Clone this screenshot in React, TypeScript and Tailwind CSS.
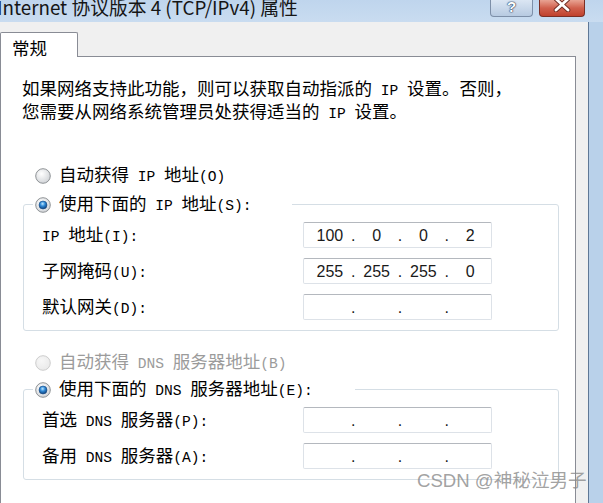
import React from "react";

// SimSun-like rendering: CJK in Noto, half-width Latin runs in a monospace at half the CJK advance
function Txt({ s }: { s: string }) {
  const parts = s.split(/([\x00-\x7f]+)/).filter((p) => p !== "");
  return (
    <>
      {parts.map((p, i) =>
        /[\x00-\x7f]/.test(p) ? (
          <span key={i} className="font-['Liberation_Mono',monospace] text-[14.6px] whitespace-pre">
            {p}
          </span>
        ) : (
          <span key={i}>{p}</span>
        )
      )}
    </>
  );
}

function Radio({ checked, disabled }: { checked?: boolean; disabled?: boolean }) {
  const id = checked ? "rc" : disabled ? "rd" : "rn";
  return (
    <svg width="16" height="16" viewBox="0 0 16 16" className="shrink-0">
      <defs>
        <radialGradient id={id + "bg"} cx="40%" cy="35%" r="70%">
          <stop offset="0%" stopColor={disabled ? "#f7f7f7" : "#ffffff"} />
          <stop offset="100%" stopColor={disabled ? "#e9e9e9" : "#cfd2d6"} />
        </radialGradient>
        <radialGradient id={id + "dot"} cx="45%" cy="35%" r="65%">
          <stop offset="0%" stopColor="#bfe8ff" />
          <stop offset="45%" stopColor="#2f8ad8" />
          <stop offset="100%" stopColor="#0d3f7a" />
        </radialGradient>
      </defs>
      <circle cx="8" cy="8" r="7.3" fill={`url(#${id}bg)`} stroke={disabled ? "#cdcdcd" : "#8f9396"} strokeWidth="1" />
      {checked && <circle cx="8" cy="8" r="4" fill={`url(#${id}dot)`} stroke="#1c4f86" strokeWidth="0.6" />}
    </svg>
  );
}

function IpBox({ values }: { values?: string[] }) {
  const v = values ?? ["", "", "", ""];
  return (
    <div className="w-[189px] h-[26px] flex items-center pl-[5px] rounded-[2px] border border-[#dde2e8] border-t-[#b4b8be] bg-white font-['Liberation_Sans',sans-serif] text-[16px] text-[#1a1a1a]">
      {v.map((n, i) => (
        <React.Fragment key={i}>
          <span className="w-[42px] text-center">{n}</span>
          {i < 3 && <span className="w-[5px] text-center">.</span>}
        </React.Fragment>
      ))}
    </div>
  );
}

function Group({
  label,
  legendW,
  rows,
}: {
  label: string;
  legendW: string;
  rows: { label: string; values?: string[] }[];
}) {
  return (
    <fieldset className="ml-[1px] w-[536px] border border-[#d5dee5] rounded-[3px] pt-[8px] pb-[10px]">
      <legend className={"ml-[9px] bg-white " + legendW}>
        <div className="flex items-center gap-[8px] h-[19px] pl-[2px]">
          <Radio checked />
          <span>
            <Txt s={label} />
          </span>
        </div>
      </legend>
      <div className="grid grid-cols-[261px_189px] gap-y-[10px] pl-[18px] items-center">
        {rows.map((r) => (
          <React.Fragment key={r.label}>
            <div>
              <Txt s={r.label} />
            </div>
            <IpBox values={r.values} />
          </React.Fragment>
        ))}
      </div>
    </fieldset>
  );
}

export default function App() {
  return (
    <div className="relative w-[603px] h-[503px] overflow-hidden bg-[#f0f0f0] text-black text-[17.5px] leading-[19px] font-['Noto_Sans_CJK_SC',sans-serif]">
      {/* title bar */}
      <div className="h-[22px] flex items-start bg-gradient-to-b from-[#bfd5ed] to-[#c9dcf0]">
        <div className="-ml-[3px] -mt-[5px] text-[18.8px] leading-[24px] whitespace-nowrap text-[#151515]">
          Internet 协议版本 4 (TCP/IPv4) 属性
        </div>
        <div className="ml-auto mr-[18px] flex gap-[6px]">
          <div className="w-[43px] h-[17px] rounded-b-[4px] border border-t-0 border-[#7d8fa8] bg-gradient-to-b from-[#dbe6f3] to-[#b7cae1] flex items-start justify-center">
            <span className="-mt-[2px] text-[15px] leading-[17px] font-bold font-['Liberation_Sans',sans-serif] text-white [text-shadow:0_0_1px_#1f3350,0_0_1px_#1f3350,0_0_2px_#4a5f7c]">
              ?
            </span>
          </div>
          <div className="w-[46px] h-[17px] rounded-b-[4px] border border-t-0 border-[#7b2f25] bg-gradient-to-b from-[#e8a393] via-[#d0604d] to-[#c0412d] flex items-start justify-center">
            <svg width="18" height="13" viewBox="0 0 18 13" className="-mt-[1px]">
              <path d="M3 0 L15 11 M15 0 L3 11" stroke="#6d2a20" strokeWidth="4.6" strokeLinecap="round" />
              <path d="M3 0 L15 11 M15 0 L3 11" stroke="#ffffff" strokeWidth="2.8" strokeLinecap="round" />
            </svg>
          </div>
        </div>
      </div>

      <div className="flex h-[481px]">
        <div className="w-[588px] pt-[10px] flex flex-col">
          {/* tab */}
          <div className="relative z-10 -mb-px w-[78px] h-[31px] border border-b-0 border-[#898c95] rounded-t-[2px] bg-white pl-[11px] pt-[5px]">
            常规
          </div>
          {/* panel */}
          <div className="w-[576px] h-[460px] border border-[#898c95] bg-white pl-[21px] pt-[21px] shrink-0">
            <div>
              <Txt s="如果网络支持此功能，则可以获取自动指派的 IP 设置。否则，" />
            </div>
            <div>
              <Txt s="您需要从网络系统管理员处获得适当的 IP 设置。" />
            </div>

            <div className="mt-[42px] ml-[13px] h-[19px] flex items-center gap-[8px]">
              <Radio />
              <span>
                <Txt s="自动获得 IP 地址(O)" />
              </span>
            </div>

            <div className="mt-[10px]">
              <Group
                label="使用下面的 IP 地址(S):"
                legendW="w-[259px]"
                rows={[
                  { label: "IP 地址(I):", values: ["100", "0", "0", "2"] },
                  { label: "子网掩码(U):", values: ["255", "255", "255", "0"] },
                  { label: "默认网关(D):" },
                ]}
              />
            </div>

            <div className="mt-[22px] ml-[13px] h-[19px] flex items-center gap-[8px] text-[#9b9b9b]">
              <Radio disabled />
              <span>
                <Txt s="自动获得 DNS 服务器地址(B)" />
              </span>
            </div>

            <div className="mt-[8px]">
              <Group
                label="使用下面的 DNS 服务器地址(E):"
                legendW="w-[322px]"
                rows={[{ label: "首选 DNS 服务器(P):" }, { label: "备用 DNS 服务器(A):" }]}
              />
            </div>
          </div>
        </div>
        <div className="w-[15px] border-l border-[#5f7896] bg-[#b9d1ea]" />
      </div>

      {/* watermark */}
      <div className="absolute left-[417px] top-[469px] text-[18.6px] leading-[24px] whitespace-nowrap text-[#8a8a8a]/80 font-['Liberation_Sans','Noto_Sans_CJK_SC',sans-serif]">
        CSDN @神秘泣男子
      </div>
    </div>
  );
}
